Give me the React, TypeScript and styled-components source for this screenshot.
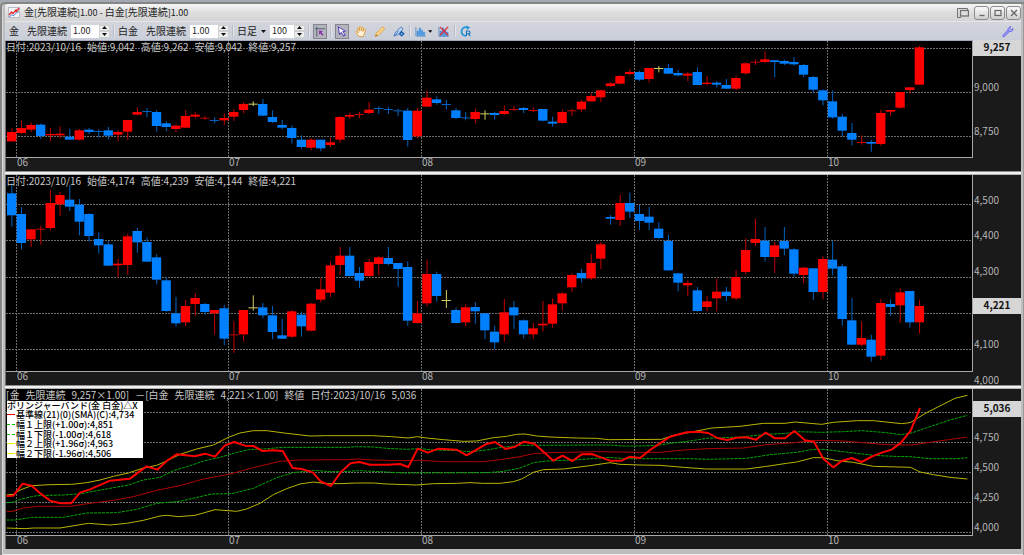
import React from "react";
import styled, { createGlobalStyle, css } from "styled-components";

const Global = createGlobalStyle`
  * { box-sizing: border-box; }
  body { margin: 0; background: #a4a8b2; }
  button, input { font: inherit; color: inherit; margin: 0; }
`;

const gothic = `"Noto Sans CJK JP", sans-serif`;

/* ---------- window chrome ---------- */

const Desktop = styled.div`
  min-height: 100vh;
  display: flex;
  flex-direction: column;
  padding-top: 2px;
  font: 10px/12px ${gothic};
`;

const Frame = styled.div`
  flex: 1;
  display: flex;
  flex-direction: column;
  background: #bdbdbd;
  border: solid #858585;
  border-width: 2px 0 0 2px;
  border-top-left-radius: 5px;
  padding: 0 3px 6px;
  box-shadow: inset 1px 0 0 #d8d8d8, inset -1px 0 0 #9a9a9a, inset 0 -1px 0 #ededed;
`;

const TitleBar = styled.header`
  display: flex;
  align-items: center;
  height: 17px;
  padding-left: 3px;
  gap: 4px;
  background: linear-gradient(#f6f6f6, #dedede 50%, #d4d4d4);
  color: #222;
  border-top-left-radius: 3px;
`;

const Title = styled.h1`
  flex: 1;
  margin: 0;
  font: 10px/14px ${gothic};
  white-space: nowrap;
`;

const Small = styled.span`
  font-size: 9px;
`;

const WindowButtons = styled.div`
  display: flex;
  align-items: center;
  gap: 1px;
`;

const WindowButton = styled.button<{ $plain?: boolean }>`
  width: 15px;
  height: 14px;
  padding: 0;
  display: grid;
  place-items: center;
  border: 1px solid #8c8c8c;
  border-radius: 3px;
  background: linear-gradient(#fafafa, #cfcfcf);
  ${(p) =>
    p.$plain &&
    css`
      border-color: transparent;
      background: none;
      margin-right: 3px;
    `}
`;

const ToolBar = styled.div`
  display: flex;
  align-items: center;
  height: 20px;
  padding: 0 6px 0 4px;
  background: linear-gradient(#d3d5dc, #caced9);
  border-bottom: 1px solid #a3aabb;
  border-top: 1px solid #e4e5e9;
  font: 10px/14px ${gothic};
  color: #1c1c1c;
  white-space: nowrap;
`;

const Group = styled.div<{ $gap?: number }>`
  display: flex;
  align-items: center;
  gap: ${(p) => p.$gap ?? 4}px;
`;

const Name = styled.span`
  margin-right: 4px;
`;

const Divider = styled.i`
  width: 2px;
  height: 12px;
  margin: 0 3px;
  background: #b9bdc8;
  border-right: 1px solid #e3e5ea;
`;

const Spacer = styled.div`
  flex: 1;
`;

const SpinBox = styled.span<{ $width: number }>`
  display: flex;
  width: ${(p) => p.$width}px;
  height: 13px;
  background: #fff;
`;

const SpinInput = styled.input`
  flex: 1;
  min-width: 0;
  border: 0;
  padding: 0 2px;
  background: #fff;
  font-size: 9px;
  line-height: 12px;
  outline: none;
`;

const SpinButtons = styled.span`
  width: 11px;
  display: flex;
  flex-direction: column;
`;

const SpinButton = styled.button`
  flex: 1;
  min-height: 0;
  padding: 0;
  display: grid;
  place-items: center;
  border: 1px solid #cfcfcf;
  background: #eee;
`;

const PeriodButton = styled.button`
  display: flex;
  align-items: center;
  gap: 4px;
  padding: 0;
  border: 0;
  background: none;
`;

const ToolButton = styled.button<{ $pressed?: boolean; $wide?: boolean }>`
  width: ${(p) => (p.$wide ? 19 : 14)}px;
  height: 15px;
  padding: 0;
  display: flex;
  align-items: center;
  justify-content: center;
  gap: 1px;
  border: 1px solid ${(p) => (p.$pressed ? "#85858c" : "transparent")};
  background: ${(p) => (p.$pressed ? "#b3b4bd" : "none")};
`;

/* ---------- chart panes ---------- */

const Pane = styled.section<{ $grow: number }>`
  flex: ${(p) => p.$grow} 0 auto;
  display: grid;
  grid-template-columns: minmax(0, 1fr) 48px;
  background: #1a1a1a;
  border-left: 1px solid #6d6d6d;
`;

const PlotColumn = styled.div`
  display: flex;
  flex-direction: column;
`;

const Plot = styled.div<{ $height: number }>`
  position: relative;
  flex: 1 0 ${(p) => p.$height}px;
  background: #000;
  border: solid #a8a8a8;
  border-width: 0 1px 1px 0;
`;

const Drawing = styled.svg`
  position: absolute;
  inset: 0;
  width: 100%;
  height: 100%;
  display: block;
`;

const Readout = styled.div`
  position: absolute;
  left: 0;
  top: 0;
  display: flex;
  gap: 6px;
  color: #c9c9c9;
  line-height: 11px;
  white-space: nowrap;
`;

const Months = styled.div`
  display: grid;
  grid-template-columns: 11fr 212fr 193fr 213fr 193fr 145fr;
  height: 13px;
  line-height: 8px;
  color: #b4b4b4;
`;

const Month = styled.span<{ $first?: boolean }>`
  ${(p) => p.$first && "grid-column-start: 2;"}
`;

const PriceAxis = styled.div`
  position: relative;
  color: #b4b4b4;
`;

const Price = styled.span<{ $at: number }>`
  position: absolute;
  left: 1px;
  top: ${(p) => p.$at}%;
  transform: translateY(-50%);
  line-height: 12px;
`;

const LastPrice = styled.strong<{ $at: number }>`
  position: absolute;
  left: 0;
  right: 0;
  top: ${(p) => p.$at}%;
  transform: translateY(-50%);
  height: 16px;
  line-height: 14px;
  text-align: center;
  background: #d6d6d6;
  color: #111;
`;

const Splitter = styled.div`
  height: 4px;
  background: linear-gradient(#8d8d8d 1px, #f0f0f0 1px, #f0f0f0 3px, #b4b4b4 3px);
`;

const Legend = styled.div`
  position: absolute;
  left: 1px;
  top: 12px;
  width: 136px;
  display: grid;
  grid-template-rows: 9px 10px 10px 9px 10px 9px;
  background: #fff;
  color: #000;
  font-size: 9px;
  line-height: 9px;
  font-weight: 500;
  white-space: nowrap;
`;

const LegendRow = styled.div`
  display: flex;
  align-items: flex-start;
  gap: 1px;
`;

const Swatch = styled.i<{ $color: string; $dashed?: boolean }>`
  width: 8px;
  margin-top: 4px;
  border-top: 1px ${(p) => (p.$dashed ? "dashed" : "solid")} ${(p) => p.$color};
`;

/* ---------- data ---------- */

// One candle per entry: kind (r = up, b = down, y = unchanged), body top, body bottom, high, low.
const gold = `
r216,244,205,244 r204,219,182,222 r195,209,187,216 b194,228,191,237 r222,226,204,244 r221,226,199,235
b230,239,206,239 r211,239,207,241 b209,216,204,222 b213,216,208,233 b211,227,201,238 r216,224,211,244
r180,215,180,239 r156,164,142,166 b153,156,144,172 b156,198,151,215 b190,201,184,214 r197,207,193,217
r168,203,150,204 r164,170,156,175 r173,176,168,179 b180,183,172,190 r174,181,161,195 r156,170,147,183
r132,150,126,160 y131,134,124,138 b132,167,117,168 b171,186,151,189 b195,203,180,208 b204,234,196,251
b239,261,226,266 r239,263,235,270 b239,265,239,274 r247,255,233,261 r171,239,168,248 r165,170,158,177
r162,165,155,174 r149,159,126,162 b144,147,139,162 b147,150,141,162 b151,154,146,168 b152,240,144,260
r152,229,144,235 r113,140,92,141 b118,129,109,134 b132,135,120,148 b151,174,144,177 b172,175,156,181
r156,177,146,190 y160,163,151,179 b159,165,155,179 r153,162,136,165 r147,150,137,153 b144,150,141,159
r150,153,142,156 b147,182,147,184 b185,191,170,200 r156,189,148,191 r151,154,146,168 r125,148,120,157
r108,124,100,124 r91,112,89,126 r70,78,67,81 r48,71,45,73 r36,42,28,46 b36,59,32,63
r24,57,24,68 y24,27,18,37 b24,41,12,42 b39,46,31,49 r41,47,36,64 b36,75,22,76
r68,72,48,76 b68,74,64,83 b75,86,57,86 r54,86,48,92 r10,40,6,44 r5,8,-2,15
r-2,6,-26,9 b1,6,0,52 b3,11,-1,15 b6,13,-9,17 b15,44,12,51 b51,89,48,98
b91,121,88,136 b124,172,91,176 b170,212,162,229 b219,239,189,256 r246,249,226,254 b246,251,240,275
r159,252,149,257 r150,155,150,167 r96,143,95,146 r82,90,82,101 r-38,74,-43,75`;

const platinum = `
b70,136,40,170 b132,219,111,238 r178,208,178,231 r176,179,166,224 r99,174,60,181 r75,103,66,138
b89,110,45,123 b104,155,87,196 b132,198,130,214 b207,226,187,251 b223,287,213,288 r281,286,266,323
r199,285,191,314 b183,217,174,248 b216,275,203,276 b262,329,253,343 b331,423,321,426 b430,460,381,469
r408,457,390,469 r384,402,370,438 b402,426,399,434 r420,430,420,494 b415,506,405,525 r493,496,454,549
r420,493,420,515 y412,415,376,422 b412,436,399,445 b436,486,408,508 b496,506,447,507 r424,500,420,504
b434,469,425,500 r401,482,399,484 r358,389,323,397 r286,368,274,381 r257,285,231,314 b257,318,231,320
b309,332,291,354 r276,318,267,320 r262,282,259,316 b264,282,231,286 b279,297,279,350 b291,452,274,467
r430,459,393,460 r312,400,269,409 b312,378,305,395 y390,393,360,414 b420,459,413,460 r412,457,403,469
b411,424,396,461 b430,481,430,508 b485,517,467,537 r427,493,387,515 b412,436,393,477 b451,493,448,505
r475,493,459,507 r461,466,393,484 r403,461,385,473 r370,400,367,422 r315,352,310,366 b309,325,297,338
r279,325,252,330 r223,266,216,297 b141,146,135,164 r99,150,75,168 b99,125,68,144 b132,153,105,180
b140,158,111,180 b176,204,156,207 b213,301,195,303 b310,338,308,364 r339,346,331,378 b361,423,351,425
r394,411,378,424 r365,385,326,424 b365,378,351,393 r321,385,300,390 r240,306,205,313 r207,219,146,228
b212,261,171,275 r226,261,216,309 b213,236,171,256 b238,311,235,320 r293,315,290,340 b295,366,295,390
r267,366,259,388 b269,296,213,316 b289,447,281,467 b451,524,384,525 r504,524,454,529 b509,560,494,575
r399,557,387,570 b402,411,388,438 r367,406,355,459 b363,457,363,473 r408,457,389,491`;

const bands = {
  upper2:
    "20,345 40,343 60,330 95,317 150,314 215,313 260,308 300,300 340,289 385,279 430,264 470,256 500,243 540,223 590,207 640,195 685,172 720,159 760,152 800,152 860,160 930,168 980,167 1115,167 1175,170 1225,174 1252,170 1280,174 1330,179 1390,184 1430,183 1480,173 1520,169 1550,163 1575,162 1610,168 1650,171 1730,174 1790,175 1825,179 1985,178 2020,166 2070,157 2135,144 2220,139 2290,130 2355,130 2385,126 2465,133 2500,127 2570,122 2620,122 2705,131 2730,128 2780,98 2865,55 2902,46",
  upper1:
    "20,368 40,366 65,357 110,347 190,345 245,341 270,336 330,325 385,315 430,300 480,292 520,272 570,257 610,243 660,232 700,220 745,209 790,207 850,202 1045,202 1070,200 1120,201 1160,205 1220,208 1260,206 1300,210 1370,212 1410,215 1460,210 1505,202 1560,196 1830,195 1870,198 1920,198 1970,196 2020,189 2070,183 2120,175 2220,171 2300,163 2360,160 2395,155 2465,157 2530,155 2585,152 2660,158 2702,164 2735,159 2780,143 2850,120 2902,106",
  base:
    "20,394 40,394 65,385 110,379 210,379 270,370 340,361 400,350 470,331 540,317 610,297 690,282 760,263 840,244 900,240 1040,239 1070,237 1120,240 1190,242 1260,241 1330,245 1450,245 1500,239 1560,230 1600,221 1650,218 1790,215 1920,217 1980,217 2040,211 2120,206 2230,204 2300,194 2370,189 2420,184 2460,181 2530,183 2600,189 2660,194 2735,195 2790,187 2860,177 2902,171",
  lower1:
    "20,420 45,420 95,412 190,412 260,399 350,398 410,388 470,370 540,364 635,342 695,341 760,325 830,293 880,278 940,271 990,275 1030,275 1075,272 1140,275 1210,279 1460,278 1510,274 1560,264 1600,248 1640,243 1720,240 1830,232 1870,236 2070,236 2120,238 2240,235 2310,224 2390,217 2440,208 2470,208 2530,215 2620,226 2680,229 2730,230 2790,236 2870,236 2902,233",
  lower2:
    "20,444 75,446 100,444 180,444 265,430 330,435 380,430 430,421 480,408 500,406 535,410 585,406 645,389 710,394 740,387 780,370 820,344 860,326 900,312 940,306 980,311 1020,311 1070,309 1120,309 1160,312 1250,315 1300,311 1370,310 1410,308 1450,310 1500,310 1540,305 1565,297 1600,277 1630,269 1690,267 1770,257 1830,248 1860,253 1920,255 1980,256 2050,262 2120,267 2240,267 2300,259 2360,250 2390,246 2440,233 2470,233 2510,242 2560,247 2620,259 2732,262 2760,276 2800,284 2850,292 2902,297",
  spread:
    "20,348 40,347 68,311 95,317 122,341 152,363 182,370 213,370 240,338 270,328 330,302 390,296 415,277 440,259 472,269 500,243 530,223 585,229 615,221 645,230 675,196 702,186 735,197 760,198 788,213 818,211 848,213 878,264 905,267 938,277 962,304 993,318 1022,277 1052,250 1078,246 1110,254 1165,254 1200,252 1225,261 1253,206 1283,218 1315,206 1370,209 1400,226 1457,193 1485,186 1517,207 1545,200 1572,185 1603,191 1632,217 1660,242 1688,227 1717,243 1745,223 1775,222 1805,233 1830,242 1865,242 1890,230 1920,234 1950,210 1980,190 2010,170 2060,157 2095,155 2125,159 2152,174 2182,180 2210,173 2240,172 2268,179 2297,158 2325,175 2355,175 2383,153 2415,181 2442,185 2470,236 2500,262 2525,243 2555,234 2585,246 2615,230 2645,218 2675,209 2703,188 2732,152 2760,84",
};

const monthLines = [49, 686, 1265, 1902, 2482];
const months = ["06", "07", "08", "09", "10"];

const body: Record<string, string> = { r: "#ff0000", b: "#0080ff", y: "#e6e070" };
const wick: Record<string, string> = { r: "#c40000", b: "#0062c0", y: "#d2cc60" };

/* ---------- chart parts ---------- */

function Grid({ top, bottom, rows }: { top: number; bottom: number; rows: number[] }) {
  return (
    <g stroke="#6c6c6c" strokeDasharray="2 1" shapeRendering="crispEdges">
      {rows.map((y) => (
        <line key={y} x1={18} x2={2916} y1={y} y2={y} vectorEffect="non-scaling-stroke" />
      ))}
      {monthLines.map((x) => (
        <line key={x} x1={x} x2={x} y1={top} y2={bottom} vectorEffect="non-scaling-stroke" />
      ))}
    </g>
  );
}

function Candles({ data }: { data: string }) {
  return (
    <g>
      {data
        .trim()
        .split(/\s+/)
        .map((entry, i) => {
          const kind = entry[0];
          const [top, bottom, high, low] = entry.slice(1).split(",").map(Number);
          const x = 35 + i * 28.97;
          return (
            <g key={i}>
              <rect x={x - 1} y={high} width={3} height={low - high} fill={wick[kind]} />
              <rect
                x={x - 14}
                y={top}
                width={28}
                height={bottom - top}
                fill={bottom - top < 4 ? wick[kind] : body[kind]}
              />
            </g>
          );
        })}
    </g>
  );
}

function Curve({ points, color, width = 1, dash }: { points: string; color: string; width?: number; dash?: string }) {
  return (
    <polyline
      points={points}
      fill="none"
      stroke={color}
      strokeWidth={width}
      strokeDasharray={dash}
      strokeLinejoin="round"
      vectorEffect="non-scaling-stroke"
    />
  );
}

type PaneProps = {
  label: string;
  height: number;
  top: number;
  rows: number[];
  readout: string[];
  prices: [string, number][];
  last: [string, number];
  children: React.ReactNode;
  overlay?: React.ReactNode;
};

function ChartPane({ label, height, top, rows, readout, prices, last, children, overlay }: PaneProps) {
  const span = (height - 1) * 3;
  return (
    <Pane $grow={height} aria-label={label}>
      <PlotColumn>
        <Plot $height={height}>
          <Drawing viewBox={`18 ${top} 2898 ${span}`} preserveAspectRatio="none" role="img" aria-label={label}>
            <Grid top={top} bottom={top + span} rows={rows} />
            {children}
          </Drawing>
          <Readout>
            {readout.map((part, i) => (
              <span key={i}>{part}</span>
            ))}
          </Readout>
          {overlay}
        </Plot>
        <Months>
          {months.map((m, i) => (
            <Month key={m} $first={i === 0}>
              {m}
            </Month>
          ))}
        </Months>
      </PlotColumn>
      <PriceAxis>
        {prices.map(([text, at]) => (
          <Price key={text} $at={at}>
            {text}
          </Price>
        ))}
        <LastPrice $at={last[1]}>{last[0]}</LastPrice>
      </PriceAxis>
    </Pane>
  );
}

/* ---------- toolbar parts ---------- */

const Caret = () => (
  <svg width="5" height="3" viewBox="0 0 5 3" aria-hidden="true">
    <path d="M0 0h5L2.500 3z" fill="#111" />
  </svg>
);

function Spin({ label, value, width }: { label: string; value: string; width: number }) {
  return (
    <SpinBox $width={width}>
      <SpinInput aria-label={label} defaultValue={value} />
      <SpinButtons>
        <SpinButton aria-label={`${label} +`}>
          <svg width="5" height="3" viewBox="0 0 5 3">
            <path d="M0 3h5L2.500 0z" fill="#111" />
          </svg>
        </SpinButton>
        <SpinButton aria-label={`${label} -`}>
          <Caret />
        </SpinButton>
      </SpinButtons>
    </SpinBox>
  );
}

const Icon = ({ children, size = 13 }: { children: React.ReactNode; size?: number }) => (
  <svg width={size} height={size} viewBox="0 0 13 13" fill="none" aria-hidden="true">
    {children}
  </svg>
);

const bars = (
  <g fill="#3c9be8" stroke="#2c7fd0" strokeWidth=".4">
    <path d="M2.200 6h1.600v5H2.200zM4.600 2.500h1.700v8.500H4.600zM7 5h1.600v6H7zM9.400 7.200h1.500V11H9.400z" />
    <path d="M1 1.500v10.200h11" stroke="#4c86c8" strokeWidth=".9" fill="none" />
  </g>
);

const legendRows: [string, string, boolean][] = [
  ["基準線(21)(0)(SMA)(C):4,734", "#ff0000", false],
  ["幅１上限(+1.00σ):4,851", "#00c000", true],
  ["幅１下限(-1.00σ):4,618", "#00c000", true],
  ["幅２上限(+1.96σ):4,963", "#f0f000", false],
  ["幅２下限(-1.96σ):4,506", "#f0f000", false],
];

export default function App() {
  return (
    <Desktop>
      <Global />
      <Frame>
        <TitleBar>
          <svg width="12" height="11" viewBox="0 0 12 11" fill="none" aria-hidden="true">
            <rect x=".5" y=".5" width="11" height="10" fill="#f4f4f8" stroke="#b9bcc8" />
            <path d="M1 8l2.500-3L5 6.500 8 3l1 1 2-3" stroke="#e03030" strokeWidth="1.400" />
            <path d="M1 10l2.500-2L6 8.500 8 6l3-1.500" stroke="#5a88d8" strokeWidth="1" />
          </svg>
          <Title>
            金<Small>[</Small>先限連続<Small>]1.00 - </Small>白金<Small>[</Small>先限連続<Small>]1.00</Small>
          </Title>
          <WindowButtons>
            <WindowButton $plain aria-label="別ウィンドウ">
              <svg width="12" height="12" viewBox="0 0 12 12" fill="none" stroke="#707070">
                <path d="M4 10.500H.5v-9h10V3" />
                <rect x="3.500" y="3.500" width="8" height="5.500" strokeWidth="1.300" />
              </svg>
            </WindowButton>
            <WindowButton aria-label="最小化">
              <svg width="8" height="8" viewBox="0 0 8 8">
                <path d="M1.500 6.500h5" stroke="#666" strokeWidth="1.300" />
              </svg>
            </WindowButton>
            <WindowButton aria-label="最大化">
              <svg width="8" height="8" viewBox="0 0 8 8">
                <rect x="1" y="1.500" width="6" height="5" fill="none" stroke="#666" strokeWidth="1.200" />
              </svg>
            </WindowButton>
            <WindowButton aria-label="閉じる">
              <svg width="8" height="8" viewBox="0 0 8 8">
                <path d="M1 1l6 6M7 1L1 7" stroke="#666" strokeWidth="1.400" />
              </svg>
            </WindowButton>
          </WindowButtons>
        </TitleBar>

        <ToolBar role="toolbar">
          <Group $gap={8}>
            <span>金</span>
            <Group $gap={0}>
              <Name>先限連続</Name>
              <Spin label="金 倍率" value="1.00" width={39} />
            </Group>
          </Group>
          <Divider />
          <Group $gap={8}>
            <span>白金</span>
            <Group $gap={0}>
              <Name>先限連続</Name>
              <Spin label="白金 倍率" value="1.00" width={39} />
            </Group>
          </Group>
          <Divider />
          <Group>
            <PeriodButton>
              日足 <Caret />
            </PeriodButton>
            <Spin label="本数" value="100" width={35} />
          </Group>
          <Divider />
          <ToolButton $pressed aria-label="カーソル線">
            <Icon>
              <path d="M3 1v11M1 3.500h11" stroke="#555a70" strokeWidth="1" />
              <path d="M5.500 5.500v4.500l1.300-1.200 2.400 2.400 1.200-1.200L8 7.600 9.600 6z" fill="#8a2fa8" />
            </Icon>
          </ToolButton>
          <Divider />
          <Group $gap={5}>
            <ToolButton $pressed aria-label="選択">
              <Icon>
                <path d="M2.500 1.500l1.200 8 2-1.600 2.600 3.600 1.700-1.200-2.500-3.500 2.500-.8z" fill="#fff" stroke="#5a48b8" strokeWidth="1.100" />
              </Icon>
            </ToolButton>
            <ToolButton aria-label="移動">
              <Icon>
                <path
                  d="M4.300 12L1 7.400c-.5-.9.600-1.500 1.200-.8L3.600 8 2.800 3.300c-.1-1 1.200-1.200 1.400-.3L5 6V1.800c0-1 1.400-1 1.500 0L6.800 6l.9-3.700c.3-.9 1.500-.6 1.400.3L8.600 6.500l1.500-2.300c.6-.8 1.700-.2 1.300.7L10.200 9l-1.400 3z"
                  fill="#fff3dc"
                  stroke="#d99a3c"
                  strokeWidth="1"
                />
              </Icon>
            </ToolButton>
            <ToolButton aria-label="鉛筆">
              <Icon>
                <path d="M1.500 11.800l1-3.400 7-7 2.200 2.200-7 7z" fill="#fbd58c" stroke="#e39a35" strokeWidth=".9" />
                <path d="M1.500 11.800l.7-2 1.400 1.400z" fill="#8a5a20" />
              </Icon>
            </ToolButton>
            <ToolButton aria-label="ペン設定">
              <Icon>
                <path d="M1 11.500l1.600-4L8.500 1.500l2.500 2-4.500 6z" fill="#b9d4f4" stroke="#4478b8" strokeWidth=".9" />
                <path d="M1.500 11.500L6 6" stroke="#4478b8" />
                <path d="M9.400 5.800l3.300 3.200-3.300 3.300-3.200-3.300z" fill="#1f5fae" />
                <circle cx="9.400" cy="9" r=".9" fill="#a9cdf2" />
              </Icon>
            </ToolButton>
          </Group>
          <Divider />
          <Group $gap={4}>
            <ToolButton $wide aria-label="指標">
              <Icon>{bars}</Icon>
              <Caret />
            </ToolButton>
            <ToolButton aria-label="指標削除">
              <Icon>
                {bars}
                <path d="M2 1.500l9 9M11 1.500l-9 9" stroke="#e02c3c" strokeWidth="1.500" />
              </Icon>
            </ToolButton>
          </Group>
          <Divider />
          <ToolButton aria-label="再読込">
            <Icon>
              <path d="M6.500 11.300A4.700 4.700 0 1 1 8 2.200" stroke="#2495dc" strokeWidth="1.900" />
              <path d="M7 0l4 2.300-3.600 2.500z" fill="#2495dc" />
              <path d="M7 11.500V6h2.300a1.500 1.500 0 0 1 0 3H7m2 0l2.200 2.500" stroke="#1673b8" strokeWidth="1.200" />
            </Icon>
          </ToolButton>
          <Spacer />
          <ToolButton aria-label="設定">
            <Icon>
              <path d="M1.800 11.200L7 6" stroke="#6464e8" strokeWidth="2.800" strokeLinecap="round" />
              <path d="M1.800 11.200L7 6" stroke="#d0d0ff" strokeWidth="1" strokeLinecap="round" />
              <path d="M9.800 1.300L8.300 3.200l1.500 1.500 2.100-1.400c.5 2-1.200 3.800-3.200 3.300C6.500 6 6 4 7 2.600c.7-1 1.700-1.400 2.800-1.300z" fill="#b8b8fc" stroke="#6464e8" strokeWidth="1" />
            </Icon>
          </ToolButton>
        </ToolBar>

        <ChartPane
          label="金 先限連続"
          height={117}
          top={-57}
          rows={[-35, 97, 228]}
          readout={["日付:2023/10/16", "始値:9,042", "高値:9,262", "安値:9,042", "終値:9,257"]}
          prices={[
            ["9,000", 35.4],
            ["8,750", 69.2],
          ]}
          last={["9,257", 5]}
        >
          <Candles data={gold} />
        </ChartPane>
        <Splitter />
        <ChartPane
          label="白金 先限連続"
          height={197}
          top={15}
          rows={[104, 212, 321, 430, 538]}
          readout={["日付:2023/10/16", "始値:4,174", "高値:4,239", "安値:4,144", "終値:4,221"]}
          prices={[
            ["4,500", 11.7],
            ["4,400", 28.8],
            ["4,300", 45.9],
            ["4,100", 80.4],
            ["4,000", 97.5],
          ]}
          last={["4,221", 62.4]}
        >
          <Candles data={platinum} />
        </ChartPane>
        <Splitter />
        <ChartPane
          label="金 - 白金 スプレッド"
          height={147}
          top={27}
          rows={[97, 188, 277, 366, 457]}
          readout={[
            "[金",
            "先限連続",
            "9,257×1.00]",
            "－[白金",
            "先限連続",
            "4,221×1.00]",
            "終値",
            "日付:2023/10/16",
            "5,036",
          ]}
          prices={[
            ["4,750", 30.3],
            ["4,500", 48.6],
            ["4,250", 67.2],
            ["4,000", 86],
          ]}
          last={["5,036", 12.3]}
          overlay={
            <Legend>
              <LegendRow>ボリンジャーバンド(金 白金)△X</LegendRow>
              {legendRows.map(([text, color, dashed]) => (
                <LegendRow key={text}>
                  <Swatch $color={color} $dashed={dashed} />
                  {text}
                </LegendRow>
              ))}
            </Legend>
          }
        >
          <Curve points={bands.upper2} color="#b8b400" />
          <Curve points={bands.lower2} color="#b8b400" />
          <Curve points={bands.upper1} color="#00a800" dash="3 1" />
          <Curve points={bands.lower1} color="#00a800" dash="3 1" />
          <Curve points={bands.base} color="#b00000" />
          <Curve points={bands.spread} color="#ff0000" width={2} />
        </ChartPane>
      </Frame>
    </Desktop>
  );
}
